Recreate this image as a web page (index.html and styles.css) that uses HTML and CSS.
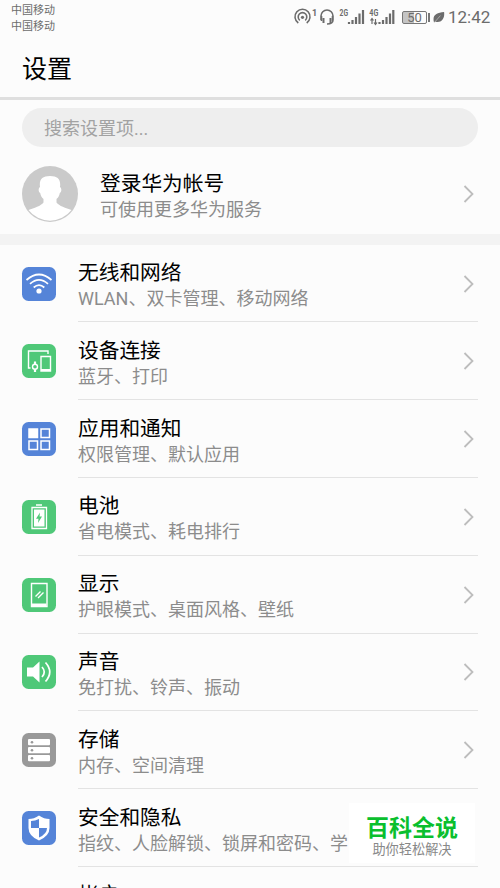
FILE: index.html
```html
<!DOCTYPE html>
<html lang="zh-CN">
<head>
<meta charset="utf-8">
<title>设置</title>
<link rel="stylesheet" href="styles.css">
</head>
<body>
<svg class="defs" width="0" height="0"><symbol id="chev" viewBox="0 0 12 20"><path d="M1.500 2 9.500 10l-8 8" fill="none" stroke="#bdbdbd" stroke-width="1.800"/></symbol></svg>
<div class="phone">
  <header class="status">
    <div class="carrier"><div>中国移动</div><div>中国移动</div></div>
    <div class="indicators">
      <svg width="112" height="24" viewBox="292 4 112 24" fill="none" stroke="#6c6c6c" stroke-width="1.600">
        <path d="M299.300 23a7.500 7.500 0 1 1 8.400 0"/><path d="M300.800 20.300a4.300 4.300 0 1 1 5.400 0" /><circle cx="303.500" cy="17.300" r="1.600" fill="#6c6c6c" stroke="none"/>
        <path d="M322 20v-4a6 6 0 0 1 12 0v4q0 4-6 4M322.500 16v5M333.500 16v5"/><path d="M324.500 18v5M331.500 18v5" stroke-width="2"/>
        <g stroke-width="2.200"><path d="M350 24v-2M353.500 24v-4M357 24v-7M360.500 24v-10.500M364 24V10"/><path d="M380.500 24v-2M384 24v-4M387.500 24v-7M391 24v-10.500M394.300 24V10"/></g>
        <path d="M373 24v-5M371.500 20.500l1.500-2 1.500 2M376.500 19v5M375 22.500l1.500 2 1.500-2" stroke-width="1.200"/>
        <g class="tiny" fill="#6c6c6c" stroke="none"><text x="313" y="16">1</text><text x="340.500" y="16" textLength="8.500" lengthAdjust="spacingAndGlyphs">2G</text><text x="370.300" y="16" textLength="9" lengthAdjust="spacingAndGlyphs">4G</text></g>
      </svg>
      <div class="battery">50</div>
      <svg class="leaf" width="12" height="13" viewBox="0 0 13 14"><path d="M1 12C-1 4 4 2 12 1c1 7-3 12-9 10.500" fill="#6c6c6c"/><path d="M1 13 8 5" stroke="#ccc" stroke-width=".7"/></svg>
      <time>12:42</time>
    </div>
  </header>
  <h1>设置</h1>
  <div class="search">搜索设置项...</div>
  <section class="account">
    <svg width="56" height="56" viewBox="0 0 56 56"><circle cx="28" cy="28" r="28" fill="#cacaca"/><path d="M6.500 44C12 42 19 40 21.500 36.500V33c-2-1.500-3-4-3.300-6-2-1-2-5-.2-6C17 13.500 20 10 28 10s11 3.500 10 11c1.800 1 1.800 5-.2 6-.3 2-1.300 4.500-3.300 6v3.500C37 40 44 42 49.500 44A27 27 0 0 1 6.500 44Z" fill="#fff"/></svg>
    <div class="text"><h2>登录华为帐号</h2><p>可使用更多华为服务</p></div>
    <svg class="chev"><use href="#chev"/></svg>
  </section>
  <main>
    <div class="row"><div class="icon blue"><svg viewBox="0 0 34 34" fill="none" stroke="#fff" stroke-width="1.700"><path d="M4.500 13q12.500-11 25 0M8 16.800q9-8 18 0M11.700 20.500q5.300-4.800 10.600 0"/><circle cx="17" cy="24" r="2.600" fill="#fff" stroke="none"/></svg></div><div class="text"><h2>无线和网络</h2><p>WLAN、双卡管理、移动网络</p></div><svg class="chev"><use href="#chev"/></svg></div>
    <div class="row"><div class="icon green"><svg viewBox="0 0 34 34" fill="none" stroke="#fff" stroke-width="1.400"><path d="M8.500 24H6.500V7h19.500v3"/><path d="M19 12.500h9.500V27H19zM19 25.800h9.500"/><circle cx="13" cy="22.800" r="2.500"/><path d="M13 17.500v2.800M13 25.300V28" stroke-width="2.200"/></svg></div><div class="text"><h2>设备连接</h2><p>蓝牙、打印</p></div><svg class="chev"><use href="#chev"/></svg></div>
    <div class="row"><div class="icon blue"><svg viewBox="0 0 34 34" fill="none" stroke="#fff" stroke-width="1.500"><path d="M7 7h8.500v8.500H7z" fill="#fff"/><path d="M19 7h8.500v8.500H19zM7 19h8.500v8.500H7zM19 19h8.500v8.500H19z"/></svg></div><div class="text"><h2>应用和通知</h2><p>权限管理、默认应用</p></div><svg class="chev"><use href="#chev"/></svg></div>
    <div class="row"><div class="icon green"><svg viewBox="0 0 34 34"><path d="M14 5h6M10 7.500h14.500V28.500H10z" fill="none" stroke="#fff" stroke-width="1.300"/><path d="M12 9.500h10.500v17H12z" fill="#fff"/><path d="m18 12.500-4 6.300h2.500L16 23l4-6.500h-2.500z" fill="#4fc878"/></svg></div><div class="text"><h2>电池</h2><p>省电模式、耗电排行</p></div><svg class="chev"><use href="#chev"/></svg></div>
    <div class="row"><div class="icon green"><svg viewBox="0 0 34 34" fill="none" stroke="#fff" stroke-width="1.400"><path d="M9.500 5.500h15.500v23H9.500z"/><path d="M10 27h14.500" stroke-width="3"/><path d="m13.500 18.500 5-5M16 20l5.500-5.500"/></svg></div><div class="text"><h2>显示</h2><p>护眼模式、桌面风格、壁纸</p></div><svg class="chev"><use href="#chev"/></svg></div>
    <div class="row"><div class="icon green"><svg viewBox="0 0 34 34"><path d="M5 12.500h6l6.500-6v21l-6.500-6H5z" fill="#fff"/><path d="M20 12q4.500 5 0 10M23.500 7.500q8.500 9.500 0 19" fill="none" stroke="#fff" stroke-width="1.700"/></svg></div><div class="text"><h2>声音</h2><p>免打扰、铃声、振动</p></div><svg class="chev"><use href="#chev"/></svg></div>
    <div class="row"><div class="icon gray"><svg viewBox="0 0 34 34"><g fill="#fff"><rect x="6" y="6" width="22" height="6.300" rx="1"/><rect x="6" y="14" width="22" height="6.300" rx="1"/><rect x="6" y="22" width="22" height="6.300" rx="1"/></g><g fill="#999"><circle cx="10" cy="9.200" r="1.300"/><circle cx="10" cy="17.200" r="1.300"/><circle cx="10" cy="25.200" r="1.300"/></g></svg></div><div class="text"><h2>存储</h2><p>内存、空间清理</p></div><svg class="chev"><use href="#chev"/></svg></div>
    <div class="row"><div class="icon blue"><svg viewBox="0 0 34 34"><path d="M17 4.500q5 3.500 10.500 3.500v9q0 8-10.500 12.500Q6.500 25 6.500 17V8Q12 8 17 4.500Z" fill="#fff"/><path d="M17 8v9H9v-7q4 0 8-2ZM17 17h8q0 6-8 9.500Z" fill="#5584d8"/></svg></div><div class="text"><h2>安全和隐私</h2><p>指纹、人脸解锁、锁屏和密码、学</p></div></div>
    <div class="row"><div class="icon pale"></div><div class="text"><h2>帐户</h2><p></p></div></div>
  </main>
  <aside class="mark"><strong>百科全说</strong><span>助你轻松解决</span></aside>
</div>
</body>
</html>
```
FILE: styles.css
```css
* { box-sizing: border-box; margin: 0; padding: 0; }
body { background: #fcfcfc; font-family: Roboto, "Noto Sans CJK SC", sans-serif; color: #111; }
.defs { display: block; }
.phone { position: relative; width: 500px; height: 888px; overflow: hidden; }
.status { height: 35px; display: flex; justify-content: space-between; padding: 2px 11px 0 11px; color: #6c6c6c; }
.carrier { font-size: 11px; line-height: 15.500px; padding-top: 1px; }
.indicators { display: flex; align-items: flex-start; }
.indicators > svg { margin-top: 2px; }
.tiny { font: bold 9px Roboto, sans-serif; }
.battery { position: relative; width: 25px; height: 13px; margin: 9px 6px 0 -1px; border: 1px solid #777; border-radius: 2px; background: linear-gradient(90deg, #c4c4c4 50%, #fcfcfc 50%); font-size: 13px; line-height: 12px; text-align: center; }
.battery::after { content: ""; position: absolute; right: -4px; top: 1px; width: 2px; height: 9px; background: #777; }
.indicators .leaf { margin: 9px 3px 0 0; }
time { font-size: 17px; line-height: 20px; margin-top: 5px; width: 41px; white-space: nowrap; }
h1 { height: 65px; padding: 2px 0 0 22px; border-bottom: 3px solid #dfdfdf; font-size: 25px; font-weight: 400; line-height: 65px; color: #000; }
.search { height: 39px; margin: 8px 22px 0; padding-left: 22px; border-radius: 20px; background: #eee; color: #a2a2a2; font-size: 18px; line-height: 42px; }
.account { height: 98px; padding: 6px 25px 0 22px; border-bottom: 11px solid #f3f3f3; display: flex; align-items: center; }
.account .text { padding: 6px 0 0 22px; }
.text { flex: 1; min-width: 0; white-space: nowrap; }
h2 { font-size: 20.700px; line-height: 26px; font-weight: 400; color: #000; }
p { font-size: 18px; line-height: 26px; min-height: 26px; color: #8c8c8c; font-weight: 400; }
.chev { width: 12px; height: 20px; flex: none; }
.row { height: 77.800px; margin-left: 22px; padding-right: 25px; display: flex; align-items: center; position: relative; top: -0.400px; }
.row .text { padding: 5px 0 0 22px; }
.row::after { content: ""; position: absolute; left: 56px; right: 22px; bottom: 0; height: 1px; background: #e3e3e3; }
.icon { width: 34px; height: 34px; border-radius: 6.500px; flex: none; }
.icon svg { display: block; width: 34px; height: 34px; }
.blue { background: #5584d8; }
.green { background: #4fc878; }
.gray { background: #999; }
.pale { background: #fffdf5; }
.mark { position: absolute; left: 349px; top: 803px; width: 126px; height: 60px; background: #fff; text-align: center; white-space: nowrap; }
.mark strong { display: block; margin-top: 12px; font-size: 23px; line-height: 28px; font-weight: 700; color: #0abf2e; }
.mark span { display: block; font-size: 13.200px; line-height: 14px; color: #888; }
```
